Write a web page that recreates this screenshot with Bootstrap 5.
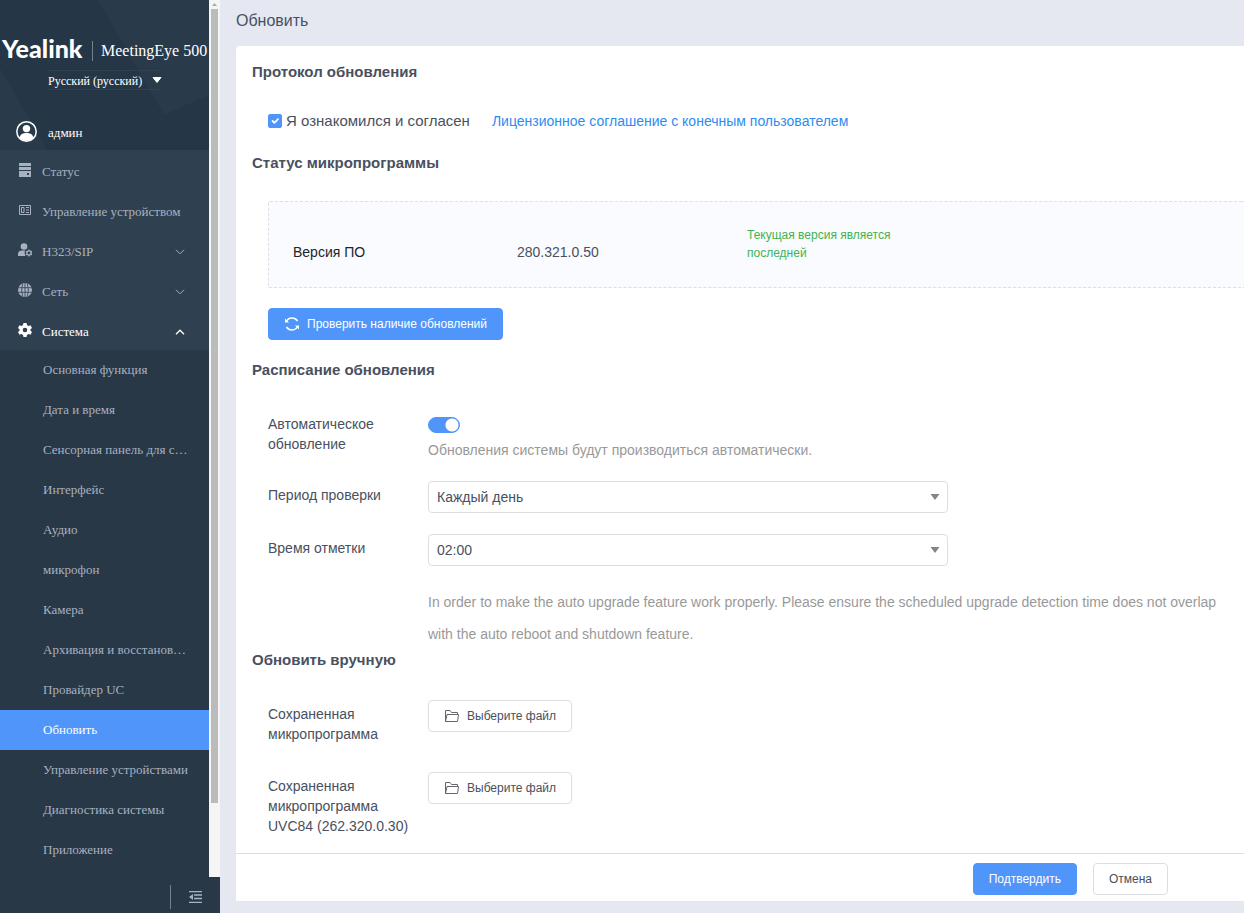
<!DOCTYPE html>
<html lang="ru">
<head>
<meta charset="utf-8">
<meta name="viewport" content="width=device-width, initial-scale=1">
<title>Обновить</title>
<link href="https://cdn.jsdelivr.net/npm/bootstrap@5.3.0/dist/css/bootstrap.min.css" rel="stylesheet">
<style>
  body { font-family: "Liberation Sans", Arial, sans-serif; font-size: 14px; line-height: 20px; color: #495060; background: #e5e8f0; }
  .side { width: 220px; background: #293846; font-family: "Liberation Serif", "Times New Roman", serif; font-size: 13px; }
  .side a, .side button.menu-link { color: #a7b1c2; text-decoration: none; }
  .side-head { height: 150px; background: #253746; color: #fff; }
  .side-head .facets { inset: 0; width: 100%; height: 100%; }
  .brand { padding: 36px 0 0 2px; height: 62px; }
  .brand-name { font: 900 25px/24px Lato, sans-serif; width: 90px; }
  .brand-model { font-size: 16px; line-height: 20px; border-left: 1px solid #75818b; padding-left: 8px; margin-top: 5px; }
  .lang { margin-left: 48px; width: 114px; height: 20px; border: solid #31424f; border-width: 1px 0; background: transparent; color: #fff; appearance: none; font-size: 12px; padding: 0; }
  .lang option { color: #333; }
  .lang-caret { right: 0; top: 7px; pointer-events: none; }
  .user { padding: 21px 0 0 16px; gap: 11px; }
  .menu-link { height: 40px; padding: 3px 24px 0 18px; width: 100%; border: 0; background: #2f4050; }
  .menu-link svg:first-child { margin-right: 10px; margin-bottom: 3px; }
  .side .menu-link.open { color: #fff; }
  .sub-link { display: block; height: 40px; line-height: 40px; padding: 0 0 0 43px; }
  .side .sub-link.active { background: #5096fa; color: #fff; }
  .track { width: 11px; background: #f5f5f5; padding: 0 2px; }
  .track .thumb { height: 90.5%; background: #bbb; }
  .side-foot { height: 36px; gap: 18px; padding: 4px 18px 0 0; }
  .side-foot .rule { width: 1px; height: 24px; background: #75818b; }
  .page-title { font-size: 16px; line-height: 20px; font-weight: 400; padding: 11px 0 15px; margin: 0; }
  .panel { background: #fff; border-radius: 4px 0 0 0; margin-bottom: 12px; }
  .panel-main { padding: 16px 0 0 16px; }
  h2 { font-size: 15px; line-height: 20px; font-weight: 700; margin: 0; }
  .gap-top { margin-top: 28px; }
  .fields { margin-top: 30px; }
  .agree { height: 22px; font-size: 15px; margin-bottom: 21px; }
  .agree .form-check-input { width: 14px; height: 14px; margin: 0 4px 0 0; border-radius: 2px; }
  .agree a { margin-left: 22px; color: #2d8cf0; text-decoration: none; font-size: 14px; }
  .form-check-input:checked { background-color: #5096fa; border-color: #5096fa; }
  .version { border: 1px dashed #dddee1; border-right: 0; background: #f9fbff; padding: 24px 24px 25px; border-radius: 2px 0 0 2px; grid-template-columns: 224px 230px 170px; }
  .latest { color: #3fb34f; font-size: 12px; line-height: 18px; }
  .check-update { margin: 20px 0; }
  .btn { height: 32px; font-size: 12px; line-height: 18px; padding: 0 15px; border-radius: 4px; --bs-btn-border-color: #dddee1; --bs-btn-color: #495060; }
  .btn.with-icon { gap: 7px; }
  .btn-primary { --bs-btn-bg: #5096fa; --bs-btn-border-color: #5096fa; --bs-btn-color: #fff; }
  .field { margin-top: 21px; }
  .field-note { margin-top: 20px; }
  .field-name { width: 160px; padding: 4px 12px 0 0; }
  .form-switch { padding: 0; margin: 0; height: 30px; min-height: 0; }
  .form-switch .form-check-input { width: 32px; height: 16px; margin: 0; }
  .form-switch .form-check-input:checked { background-image: radial-gradient(circle at 23px 7px, #fff 6px, transparent 7px); background-size: 100% 100%; }
  .hint { color: #999; }
  .hint-tall { line-height: 32px; }
  .picker { max-width: 520px; }
  .form-select { height: 32px; font-size: 14px; line-height: 20px; padding: 0 24px 0 8px; border-color: #dddee1; color: #495060; background-image: none; border-radius: 4px; }
  .picker svg { right: 8px; top: 13px; pointer-events: none; }
  .panel-foot { border-top: 1px solid #dddee1; height: 48px; padding-right: 76px; padding-top: 3px; }
</style>
</head>
<body class="d-flex vh-100 overflow-hidden">

<aside class="side d-flex flex-column flex-shrink-0">
  <div class="d-flex flex-grow-1 overflow-hidden">
    <div class="flex-grow-1 overflow-hidden">
      <header class="side-head position-relative">
        <svg class="facets position-absolute" viewBox="0 0 209 150" aria-hidden="true"><path d="M98 0H209V95L164 115Z" fill="#293b4a"/><path d="M0 68L47 150H0Z" fill="#293b4a"/></svg>
        <div class="position-relative">
          <div class="brand d-flex align-items-start text-nowrap">
            <span class="brand-name">Yealink</span><span class="brand-model">MeetingEye 500</span>
          </div>
          <div class="d-flex pt-2">
            <div class="position-relative">
              <select class="lang d-block" aria-label="Язык"><option>Русский (русский)</option></select>
              <svg class="lang-caret position-absolute" width="10" height="6" viewBox="0 0 10 6"><path d="M1 .5H9L5 5.5Z" fill="#fff" stroke="#fff" stroke-linejoin="round"/></svg>
            </div>
          </div>
          <div class="user d-flex align-items-center mt-2">
            <svg width="21" height="21" viewBox="0 0 21 21"><circle cx="10.500" cy="10.500" r="9.700" fill="none" stroke="#fff" stroke-width="1.500"/><circle cx="10.500" cy="7.600" r="3.700" fill="#fff"/><path d="M3.700 16.500C4.500 13 7 12 10.500 12S16.500 13 17.300 16.500Q14.500 19.700 10.500 19.700T3.700 16.500Z" fill="#fff"/></svg>
            <span class="pt-1">админ</span>
          </div>
        </div>
      </header>
      <nav>
        <a href="#" class="menu-link d-flex align-items-center">
          <svg width="14" height="14" viewBox="0 0 14 14" fill="currentColor"><path d="M1 0H13V3H1ZM1 4H13V7H1Z"/><path fill-rule="evenodd" d="M1 8H13V14H1ZM9 10V12H11V10Z"/></svg>Статус</a>
        <a href="#" class="menu-link d-flex align-items-center">
          <svg width="14" height="12" viewBox="0 0 14 12" fill="none" stroke="currentColor"><path d="M1.500 1.500H12.500V10.500H1.500ZM3.500 3.500H6V8.500H3.500ZM8 3.500H11M8 6H11M8 8.500H11"/></svg>Управление устройством</a>
        <button type="button" class="menu-link d-flex align-items-center">
          <svg width="14" height="14" viewBox="0 0 14 14" fill="currentColor"><circle cx="6" cy="3.500" r="3.300"/><path d="M0 13V11Q0 7.500 4 7.500H7Q6 10 7.500 13Z"/><circle cx="11" cy="10" r="2.100" fill="none" stroke="currentColor" stroke-width="1.300"/><path d="M11 6.500V8M11 12V13.500M8 8.200L9.300 9M12.700 11L14 11.800M8 11.800L9.300 11M12.700 9L14 8.200" stroke="currentColor" stroke-width="1.200"/></svg>H323/SIP
          <svg class="ms-auto" width="10" height="6" viewBox="0 0 10 6" fill="none" stroke="currentColor"><path d="M1 .8L5 4.800L9 .8"/></svg></button>
        <button type="button" class="menu-link d-flex align-items-center">
          <svg width="14" height="14" viewBox="0 0 14 14"><circle cx="7" cy="7" r="7" fill="currentColor"/><path d="M7 0V14M0 4.700H14M0 9.300H14M4.700 .5Q2.500 7 4.700 13.500M9.300 .5Q11.500 7 9.300 13.500" fill="none" stroke="#2f4050" stroke-width=".8"/></svg>Сеть
          <svg class="ms-auto" width="10" height="6" viewBox="0 0 10 6" fill="none" stroke="currentColor"><path d="M1 .8L5 4.800L9 .8"/></svg></button>
        <button type="button" class="menu-link open d-flex align-items-center" aria-expanded="true">
          <svg width="14" height="14" viewBox="0 0 14 14" fill="currentColor"><path fill-rule="evenodd" d="M5.500 0H8.500L9 2L10.500 2.900L12.500 2.300L14 4.900L12.500 6.300V7.700L14 9.100L12.500 11.700L10.500 11.100L9 12L8.500 14H5.500L5 12L3.500 11.100L1.500 11.700L0 9.100L1.500 7.700V6.300L0 4.900L1.500 2.300L3.500 2.900L5 2ZM7 4.700A2.300 2.300 0 1 0 7 9.300A2.300 2.300 0 1 0 7 4.700Z"/></svg>Система
          <svg class="ms-auto" width="10" height="6" viewBox="0 0 10 6" fill="none" stroke="currentColor" stroke-width="1.300"><path d="M1 5.200L5 1.200L9 5.200"/></svg></button>
        <a href="#" class="sub-link text-nowrap">Основная функция</a>
        <a href="#" class="sub-link text-nowrap">Дата и время</a>
        <a href="#" class="sub-link text-nowrap">Сенсорная панель для с…</a>
        <a href="#" class="sub-link text-nowrap">Интерфейс</a>
        <a href="#" class="sub-link text-nowrap">Аудио</a>
        <a href="#" class="sub-link text-nowrap">микрофон</a>
        <a href="#" class="sub-link text-nowrap">Камера</a>
        <a href="#" class="sub-link text-nowrap">Архивация и восстанов…</a>
        <a href="#" class="sub-link text-nowrap">Провайдер UC</a>
        <a href="#" class="sub-link text-nowrap active" aria-current="page">Обновить</a>
        <a href="#" class="sub-link text-nowrap">Управление устройствами</a>
        <a href="#" class="sub-link text-nowrap">Диагностика системы</a>
        <a href="#" class="sub-link text-nowrap">Приложение</a>
      </nav>
    </div>
    <div class="track d-flex flex-column flex-shrink-0" aria-hidden="true">
      <svg width="7" height="9" viewBox="0 0 7 9" class="flex-shrink-0"><path d="M1 6L3.500 3L6 6Z" fill="#aaa"/></svg>
      <div class="thumb"></div>
    </div>
  </div>
  <div class="side-foot d-flex align-items-center justify-content-end flex-shrink-0">
    <span class="rule"></span>
    <a href="#" class="d-flex" aria-label="Свернуть меню"><svg width="13" height="12" viewBox="0 0 13 12" fill="none" stroke="currentColor"><path d="M0 .5H13M5 4H13M5 7.500H13M0 11.500H13" stroke-width="1.300"/><path d="M4 3V9L0 6Z" fill="currentColor" stroke="none"/></svg></a>
  </div>
</aside>

<main class="d-flex flex-column flex-grow-1 ps-3 overflow-hidden">
  <h1 class="page-title">Обновить</h1>
  <form class="panel d-flex flex-column flex-grow-1 overflow-hidden">
    <div class="panel-main flex-grow-1 overflow-hidden">
      <h2>Протокол обновления</h2>
      <div class="agree gap-top ps-3 d-flex align-items-center">
        <input class="form-check-input" type="checkbox" id="agree" checked>
        <label for="agree">Я ознакомился и согласен</label>
        <a href="#">Лицензионное соглашение с конечным пользователем</a>
      </div>

      <h2>Статус микропрограммы</h2>
      <div class="gap-top ps-3">
        <div class="version d-grid align-items-end">
          <div class="text-dark">Версия ПО</div>
          <div>280.321.0.50</div>
          <div class="latest">Текущая версия является последней</div>
        </div>
        <button type="button" class="btn btn-primary with-icon check-update d-flex align-items-center">
          <svg width="16" height="14" viewBox="0 0 16 14" fill="none" stroke="currentColor" stroke-width="1.500"><path d="M2.500 4.500C4.500 0 11 0 13.500 4M2.500 10C5 14 11.500 14 13.500 9.500"/><path d="M1 1.500V5.500H5ZM15 12.500V8.500H11Z" fill="currentColor" stroke="none"/></svg>
          Проверить наличие обновлений</button>
      </div>

      <h2>Расписание обновления</h2>
      <div class="fields ps-3 pe-3">
        <div class="d-flex">
          <label class="field-name flex-shrink-0" for="auto">Автоматическое обновление</label>
          <div>
            <div class="form-check form-switch d-flex align-items-center"><input class="form-check-input" type="checkbox" role="switch" id="auto" checked></div>
            <div class="hint">Обновления системы будут производиться автоматически.</div>
          </div>
        </div>
        <div class="field d-flex">
          <label class="field-name flex-shrink-0" for="period">Период проверки</label>
          <div class="picker position-relative flex-grow-1">
            <select class="form-select" id="period"><option>Каждый день</option></select>
            <svg class="position-absolute" width="10" height="6" viewBox="0 0 10 6"><path d="M.5 0H9.500L5 6Z" fill="#80848f"/></svg>
          </div>
        </div>
        <div class="field d-flex">
          <label class="field-name flex-shrink-0" for="time">Время отметки</label>
          <div class="picker position-relative flex-grow-1">
            <select class="form-select" id="time"><option>02:00</option></select>
            <svg class="position-absolute" width="10" height="6" viewBox="0 0 10 6"><path d="M.5 0H9.500L5 6Z" fill="#80848f"/></svg>
          </div>
        </div>
        <div class="field-note d-flex">
          <div class="field-name flex-shrink-0"></div>
          <div class="hint hint-tall">In order to make the auto upgrade feature work properly. Please ensure the scheduled upgrade detection time does not overlap with the auto reboot and shutdown feature.</div>
        </div>
      </div>

      <h2>Обновить вручную</h2>
      <div class="fields ps-3">
        <div class="d-flex">
          <div class="field-name flex-shrink-0" id="fw">Сохраненная микропрограмма</div>
          <button type="button" class="btn with-icon bg-white d-flex align-items-center" aria-describedby="fw">
            <svg width="16" height="14" viewBox="0 0 16 14" fill="none" stroke="#62666f"><path d="M1.500 12.500V1.500H6L7.500 3.500H13.500V5.500M1.500 12.500L3 5.500H14.500L13.500 12.500Z" stroke-linejoin="round"/></svg>Выберите файл</button>
        </div>
        <div class="d-flex gap-top">
          <div class="field-name flex-shrink-0" id="fw-cam">Сохраненная микропрограмма UVC84 (262.320.0.30)</div>
          <button type="button" class="btn with-icon bg-white d-flex align-items-center" aria-describedby="fw-cam">
            <svg width="16" height="14" viewBox="0 0 16 14" fill="none" stroke="#62666f"><path d="M1.500 12.500V1.500H6L7.500 3.500H13.500V5.500M1.500 12.500L3 5.500H14.500L13.500 12.500Z" stroke-linejoin="round"/></svg>Выберите файл</button>
        </div>
      </div>
    </div>
    <div class="panel-foot d-flex align-items-center justify-content-end gap-3 flex-shrink-0">
      <button type="submit" class="btn btn-primary">Подтвердить</button>
      <button type="button" class="btn bg-white">Отмена</button>
    </div>
  </form>
</main>

<script src="https://cdn.jsdelivr.net/npm/bootstrap@5.3.0/dist/js/bootstrap.bundle.min.js"></script>
</body>
</html>
